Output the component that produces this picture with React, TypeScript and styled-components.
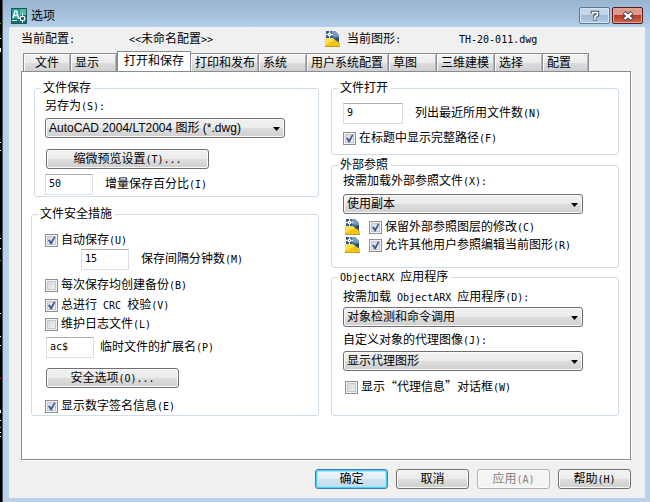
import React, { useState } from "react";
import styled, { createGlobalStyle, css } from "styled-components";

const GlobalStyle = createGlobalStyle`
  * { box-sizing: border-box; }
  body {
    margin: 0;
    background: #b9d1ea;
    color: #000;
    font-family: "Liberation Sans", "Noto Sans CJK SC", sans-serif;
    font-size: 12px;
    line-height: 16px;
  }
  button, input, select { font: inherit; color: inherit; margin: 0; }
`;

const Screen = styled.div`
  display: flex;
  min-height: 100vh;
`;

const Desktop = styled.div`
  flex: none;
  width: 3px;
  background: #000;
  border-right: 1px solid #4a5560;
  svg { display: block; }
`;

const Window = styled.main`
  flex: 1;
  min-width: 0;
  display: flex;
  flex-direction: column;
  padding: 0 5px 4px 6px;
  background: linear-gradient(#99b4d1 0px, #a9c4e1 18px, #b9d1ea 30px, #b9d1ea 100%);
`;

const TitleBar = styled.header`
  display: flex;
  align-items: center;
  height: 27px;
  padding: 4px 2px 0;
`;

const Title = styled.h1`
  flex: 1;
  margin: 0 0 0 4px;
  font-size: 12px;
  font-weight: 400;
`;

const CaptionButton = styled.button<{ $close?: boolean }>`
  display: flex;
  align-items: center;
  justify-content: center;
  width: 31px;
  height: 17px;
  margin-left: 2px;
  padding: 0;
  border: 1px solid ${(p) => (p.$close ? "#541a1e" : "#5f7891")};
  border-radius: 2px;
  box-shadow: inset 0 0 0 1px ${(p) => (p.$close ? "#e3a597" : "#d5e4f3")};
  background: ${(p) =>
    p.$close
      ? "linear-gradient(#dd9a8c 45%, #b83a25 50%, #cc6a50)"
      : "linear-gradient(#c3d6ea 45%, #9fbad6 50%, #b4cce5)"};
`;

const Client = styled.div`
  flex: 1;
  display: flex;
  flex-direction: column;
  padding: 0 14px 9px 12px;
  background: #f0f0f0;
`;

const Info = styled.div`
  display: grid;
  grid-template-columns: 108px 196px 22px 112px 1fr;
  align-items: center;
  height: 24px;
`;

const HalfWidth = styled.span`
  font-family: "DejaVu Sans Mono", monospace;
  font-size: 10px;
  white-space: pre;
`;

const FullWidth = styled.span`
  font-family: "Noto Sans CJK SC", sans-serif;
`;

const Tabs = styled.div`
  display: flex;
  align-items: flex-end;
  height: 21px;
  padding-left: 2px;
  margin-bottom: -1px;
`;

const Tab = styled.button<{ $w: number; $active?: boolean; $center?: boolean }>`
  width: ${(p) => p.$w}px;
  height: 19px;
  padding: 0 0 0 ${(p) => (p.$center ? 0 : 4)}px;
  border: 1px solid #898c95;
  border-left-width: 0;
  background: linear-gradient(#f3f3f3, #ebebeb 50%, #dddddd 52%, #cfcfcf);
  box-shadow: inset 1px 1px 0 #fafafa, inset -1px 0 0 #b4b6bc;
  text-align: ${(p) => (p.$center ? "center" : "left")};
  line-height: 16px;
  white-space: nowrap;
  &:first-child { border-left-width: 1px; }
  ${(p) =>
    p.$active &&
    css`
      height: 21px;
      padding: 0 0 2px 6px;
      border-left-width: 1px;
      border-bottom-color: #fff;
      background: #fff;
      box-shadow: none;
    `}
`;

const Panel = styled.section`
  flex: 1;
  display: grid;
  grid-template-columns: 1fr 1fr;
  column-gap: 12px;
  align-items: start;
  padding: 9px 11px 43px 9px;
  border: 1px solid #898c95;
  background: #fff;
  box-shadow: 1px 1px 0 #fff;
`;

const Column = styled.div`
  min-width: 0;
  display: flex;
  flex-direction: column;
`;

const Group = styled.fieldset<{ $h: number; $gap?: number; $inset?: number }>`
  min-width: 0;
  min-height: ${(p) => p.$h}px;
  margin: ${(p) => p.$gap ?? 0}px 0 0 ${(p) => p.$inset ?? 0}px;
  padding: 0 10px;
  border: 1px solid #d0dce6;
  border-radius: 3px;
  legend {
    margin-left: -4px;
    padding: 0 3px 0 2px;
    line-height: 14px;
  }
`;

const Row = styled.div<{ $top?: number; $left?: number; $gap?: number }>`
  display: flex;
  align-items: center;
  gap: ${(p) => p.$gap ?? 0}px;
  margin-top: ${(p) => p.$top ?? 0}px;
  padding-left: ${(p) => p.$left ?? 0}px;
  white-space: nowrap;
`;

const TextInput = styled.input<{ $w: number }>`
  width: ${(p) => p.$w}px;
  height: 21px;
  padding: 0 3px 2px;
  border: 1px solid #dcdfe6;
  border-top-color: #abadb3;
  border-radius: 1px;
  background: #fff;
  font-family: "DejaVu Sans Mono", monospace;
  font-size: 10px;
`;

const PushButton = styled.button<{ $w: number; $primary?: boolean }>`
  width: ${(p) => p.$w}px;
  height: 20px;
  padding: 0;
  border: 1px solid #707070;
  border-radius: 3px;
  box-shadow: inset 0 0 0 1px #fbfbfb;
  background: linear-gradient(#f2f2f2, #ebebeb 48%, #dddddd 52%, #cfcfcf);
  line-height: 16px;
  white-space: nowrap;
  ${(p) =>
    p.$primary &&
    css`
      border-color: #3c7fb1;
      box-shadow: inset 0 0 0 1px #48d1f7, inset 0 0 0 2px #a8e4f8;
      background: linear-gradient(#eef6fa, #e2f0f7 48%, #cfe3ee 52%, #c4dbe8);
    `}
  &:disabled {
    border-color: #adb2b5;
    background: #f4f4f4;
    color: #838383;
  }
`;

const SelectBox = styled.div`
  position: relative;
  width: 240px;
  max-width: 100%;
  svg {
    position: absolute;
    top: 9px;
    right: 5px;
    pointer-events: none;
  }
`;

const NativeSelect = styled.select`
  display: block;
  width: 100%;
  height: 20px;
  padding: 0 18px 0 3px;
  appearance: none;
  border: 1px solid #707070;
  border-radius: 3px;
  box-shadow: inset 0 0 0 1px #fafafa;
  background: linear-gradient(#f2f2f2, #ebebeb 48%, #dddddd 52%, #cfcfcf);
`;

const CheckLabel = styled.label`
  display: flex;
  align-items: center;
  gap: 3px;
  height: 16px;
  white-space: nowrap;
`;

const CheckMark = styled.span`
  display: grid;
  width: 13px;
  height: 13px;
  > * { grid-area: 1 / 1; }
  svg { pointer-events: none; z-index: 1; }
`;

const CheckInput = styled.input`
  appearance: none;
  width: 13px;
  height: 13px;
  border: 1px solid #8e8f8f;
  background: linear-gradient(135deg, #cdd2d8, #f6f6f6);
  box-shadow: inset 0 0 0 1px #f4f4f4, inset 0 0 0 2px #c3c8ce;
`;

const Footer = styled.footer`
  display: flex;
  justify-content: flex-end;
  gap: 8px;
  margin-top: 9px;
`;

/* Splits a caption so that Latin runs take half the advance of a Chinese
   character, and curly quotes take the full advance. */
function T({ children }: { children: string }) {
  return (
    <>
      {children.split(/([\x20-\x7e]+|[“”])/).map((run, i) => {
        if (i % 2 === 0) return run;
        const Run = /[“”]/.test(run) ? FullWidth : HalfWidth;
        return <Run key={i}>{run}</Run>;
      })}
    </>
  );
}

function Select({ id, options }: { id: string; options: string[] }) {
  return (
    <SelectBox>
      <NativeSelect id={id}>
        {options.map((o) => (
          <option key={o}>{o}</option>
        ))}
      </NativeSelect>
      <svg width="7" height="4" viewBox="0 0 7 4" aria-hidden="true">
        <path d="M0 0h7L3.5 4z" fill="#000" />
      </svg>
    </SelectBox>
  );
}

function Check({ label, on = false }: { label: string; on?: boolean }) {
  const [checked, setChecked] = useState(on);
  return (
    <CheckLabel>
      <CheckMark>
        <CheckInput
          type="checkbox"
          checked={checked}
          onChange={(e) => setChecked(e.target.checked)}
        />
        {checked && (
          <svg width="13" height="13" viewBox="0 0 13 13" aria-hidden="true">
            <path d="M3 6.2l1.6-.8L6 7.6 9 2.4l1.4.5L6.7 10.4H5.6z" fill="#3f5a9b" />
          </svg>
        )}
      </CheckMark>
      <span>
        <T>{label}</T>
      </span>
    </CheckLabel>
  );
}

function DrawingIcon() {
  return (
    <svg width="16" height="16" viewBox="0 0 16 16" aria-hidden="true">
      <path d="M1 0h9l4 4v11H1z" fill="#4b739d" />
      <path d="M7 0h3l4 4v2L7 5z" fill="#7d9dbd" />
      <path d="M9 8l5-2v7z" fill="#2a4d78" />
      <path d="M1 0h3v2H1zM1 5h6v2H1z" fill="#31567f" />
      <path d="M4.500 0v7M1 3.500h7" stroke="#e6f0f8" />
      <path d="M3 2h3v3H3z" fill="#fff" />
      <path d="M4 3h1v1H4z" fill="#4b739d" />
      <path d="M0 7h7l8 5v4H0z" fill="#f0c419" />
      <path d="M0 7h7l3 2-10 5z" fill="#fbe04e" />
      <path d="M0 15h15v1H0z" fill="#c69a12" />
    </svg>
  );
}

function AppIcon() {
  return (
    <svg width="16" height="16" viewBox="0 0 16 16" aria-hidden="true">
      <path d="M0 0h16v16H0z" fill="#16706b" />
      <path d="M1 1h9v10H1z" fill="#2d9b90" />
      <path d="M9 1h6v6H9z" fill="#58b9aa" />
      <path d="M2 10L4 3h1.500l2 7M3 7.500h4" fill="none" stroke="#e9fffb" strokeWidth="1.500" />
      <path d="M1 12.500h5M11.500 5v4M11.500 12v3M13 10.500h2M7 10.500h3" stroke="#e9fffb" />
      <path d="M9.500 8.500h4v4h-4z" fill="#16706b" stroke="#fff" />
      <path d="M.5.5h15v15H.5z" fill="none" stroke="#0e5a57" />
    </svg>
  );
}

const specks: [number, number, string][] = [
  [23, 1, "#1fc31f"], [38, 1, "#fff"], [48, 4, "#fff"], [142, 1, "#fff"],
  [150, 1, "#fff"], [238, 1, "#fff"], [248, 1, "#fff"], [260, 1, "#1fc31f"],
  [313, 1, "#fff"], [336, 1, "#fff"], [345, 1, "#fff"], [378, 1, "#e22"],
  [410, 3, "#fff"], [420, 1, "#fff"], [427, 1, "#aaa"], [432, 1, "#fff"], [436, 1, "#fff"],
];

const tabs: { name: string; w: number; center?: boolean }[] = [
  { name: "文件", w: 48, center: true },
  { name: "显示", w: 46 },
  { name: "打开和保存", w: 74 },
  { name: "打印和发布", w: 68 },
  { name: "系统", w: 48 },
  { name: "用户系统配置", w: 82 },
  { name: "草图", w: 48 },
  { name: "三维建模", w: 58 },
  { name: "选择", w: 48 },
  { name: "配置", w: 46 },
];

export default function App() {
  const [active, setActive] = useState(2);
  return (
    <Screen>
      <GlobalStyle />
      <Desktop>
        <svg width="2" height="440" viewBox="0 0 2 440" aria-hidden="true">
          {specks.map(([y, h, fill]) => (
            <rect key={y} x="0" y={y} width="1" height={h} fill={fill} />
          ))}
        </svg>
      </Desktop>
      <Window>
        <TitleBar>
          <AppIcon />
          <Title>选项</Title>
          <CaptionButton aria-label="帮助">
            <svg width="10" height="12" viewBox="0 0 10 12" aria-hidden="true">
              <path d="M2.500 4V2.500h5V5L5 6.500V8M5 9v2" fill="none" stroke="#47525f" strokeWidth="3.500" />
              <path d="M2.500 4V2.500h5V5L5 6.500V8M5 9v1.500" fill="none" stroke="#fff" strokeWidth="1.600" />
            </svg>
          </CaptionButton>
          <CaptionButton $close aria-label="关闭">
            <svg width="12" height="10" viewBox="0 0 12 10" aria-hidden="true">
              <path d="M2 1.500l8 7M10 1.500l-8 7" stroke="#4b4a5c" strokeWidth="4.200" />
              <path d="M2.500 2l7 6M9.500 2l-7 6" stroke="#fff" strokeWidth="2.200" />
            </svg>
          </CaptionButton>
        </TitleBar>
        <Client>
          <Info>
            <span><T>当前配置:</T></span>
            <span><T>{"<<未命名配置>>"}</T></span>
            <DrawingIcon />
            <span><T>当前图形:</T></span>
            <span><T>TH-20-011.dwg</T></span>
          </Info>
          <Tabs role="tablist">
            {tabs.map((t, i) => (
              <Tab
                key={t.name}
                role="tab"
                aria-selected={i === active}
                $w={t.w}
                $center={t.center}
                $active={i === active}
                onClick={() => setActive(i)}
              >
                {t.name}
              </Tab>
            ))}
          </Tabs>
          <Panel role="tabpanel">
            <Column>
              <Group $h={116} $inset={3}>
                <legend>文件保存</legend>
                <Row $top={3}><label htmlFor="save-as"><T>另存为(S):</T></label></Row>
                <Row $top={3}>
                  <Select id="save-as" options={["AutoCAD 2004/LT2004 图形 (*.dwg)"]} />
                </Row>
                <Row $top={11} $left={1}>
                  <PushButton $w={163}><T>缩微预览设置(T)...</T></PushButton>
                </Row>
                <Row $top={5} $gap={12}>
                  <TextInput id="percent" $w={48} defaultValue="50" />
                  <label htmlFor="percent"><T>增量保存百分比(I)</T></label>
                </Row>
              </Group>
              <Group $h={209} $gap={10}>
                <legend>文件安全措施</legend>
                <Row $top={11} $left={3}><Check on label="自动保存(U)" /></Row>
                <Row $top={1} $left={39} $gap={12}>
                  <TextInput id="minutes" $w={48} defaultValue="15" />
                  <label htmlFor="minutes"><T>保存间隔分钟数(M)</T></label>
                </Row>
                <Row $top={7} $left={3}><Check label="每次保存均创建备份(B)" /></Row>
                <Row $top={4} $left={3}><Check on label="总进行 CRC 校验(V)" /></Row>
                <Row $top={3} $left={3}><Check label="维护日志文件(L)" /></Row>
                <Row $top={5} $left={4} $gap={6}>
                  <TextInput id="ext" $w={48} defaultValue="ac$" />
                  <label htmlFor="ext"><T>临时文件的扩展名(P)</T></label>
                </Row>
                <Row $top={10} $left={4}>
                  <PushButton $w={133}><T>安全选项(O)...</T></PushButton>
                </Row>
                <Row $top={10} $left={3}><Check on label="显示数字签名信息(E)" /></Row>
              </Group>
            </Column>
            <Column>
              <Group $h={74}>
                <legend>文件打开</legend>
                <Row $top={8} $left={1} $gap={12}>
                  <TextInput id="recent" $w={60} defaultValue="9" />
                  <label htmlFor="recent"><T>列出最近所用文件数(N)</T></label>
                </Row>
                <Row $top={6} $left={1}><Check on label="在标题中显示完整路径(F)" /></Row>
              </Group>
              <Group $h={110} $gap={3}>
                <legend>外部参照</legend>
                <Row $top={1} $left={1}>
                  <label htmlFor="xref"><T>按需加载外部参照文件(X):</T></label>
                </Row>
                <Row $top={4} $left={1}><Select id="xref" options={["使用副本"]} /></Row>
                <Row $top={5} $left={3} $gap={8}>
                  <DrawingIcon />
                  <Check on label="保留外部参照图层的修改(C)" />
                </Row>
                <Row $top={2} $left={3} $gap={8}>
                  <DrawingIcon />
                  <Check on label="允许其他用户参照编辑当前图形(R)" />
                </Row>
              </Group>
              <Group $h={146} $gap={2}>
                <legend><T>ObjectARX 应用程序</T></legend>
                <Row $top={4} $left={1}>
                  <label htmlFor="arx"><T>按需加载 ObjectARX 应用程序(D):</T></label>
                </Row>
                <Row $top={1} $left={1}><Select id="arx" options={["对象检测和命令调用"]} /></Row>
                <Row $top={5} $left={1}>
                  <label htmlFor="proxy"><T>自定义对象的代理图像(J):</T></label>
                </Row>
                <Row $top={2} $left={1}><Select id="proxy" options={["显示代理图形"]} /></Row>
                <Row $top={8} $left={3}><Check label="显示“代理信息”对话框(W)" /></Row>
              </Group>
            </Column>
          </Panel>
          <Footer>
            <PushButton $w={73} $primary>确定</PushButton>
            <PushButton $w={73}>取消</PushButton>
            <PushButton $w={73} disabled><T>应用(A)</T></PushButton>
            <PushButton $w={73}><T>帮助(H)</T></PushButton>
          </Footer>
        </Client>
      </Window>
    </Screen>
  );
}
